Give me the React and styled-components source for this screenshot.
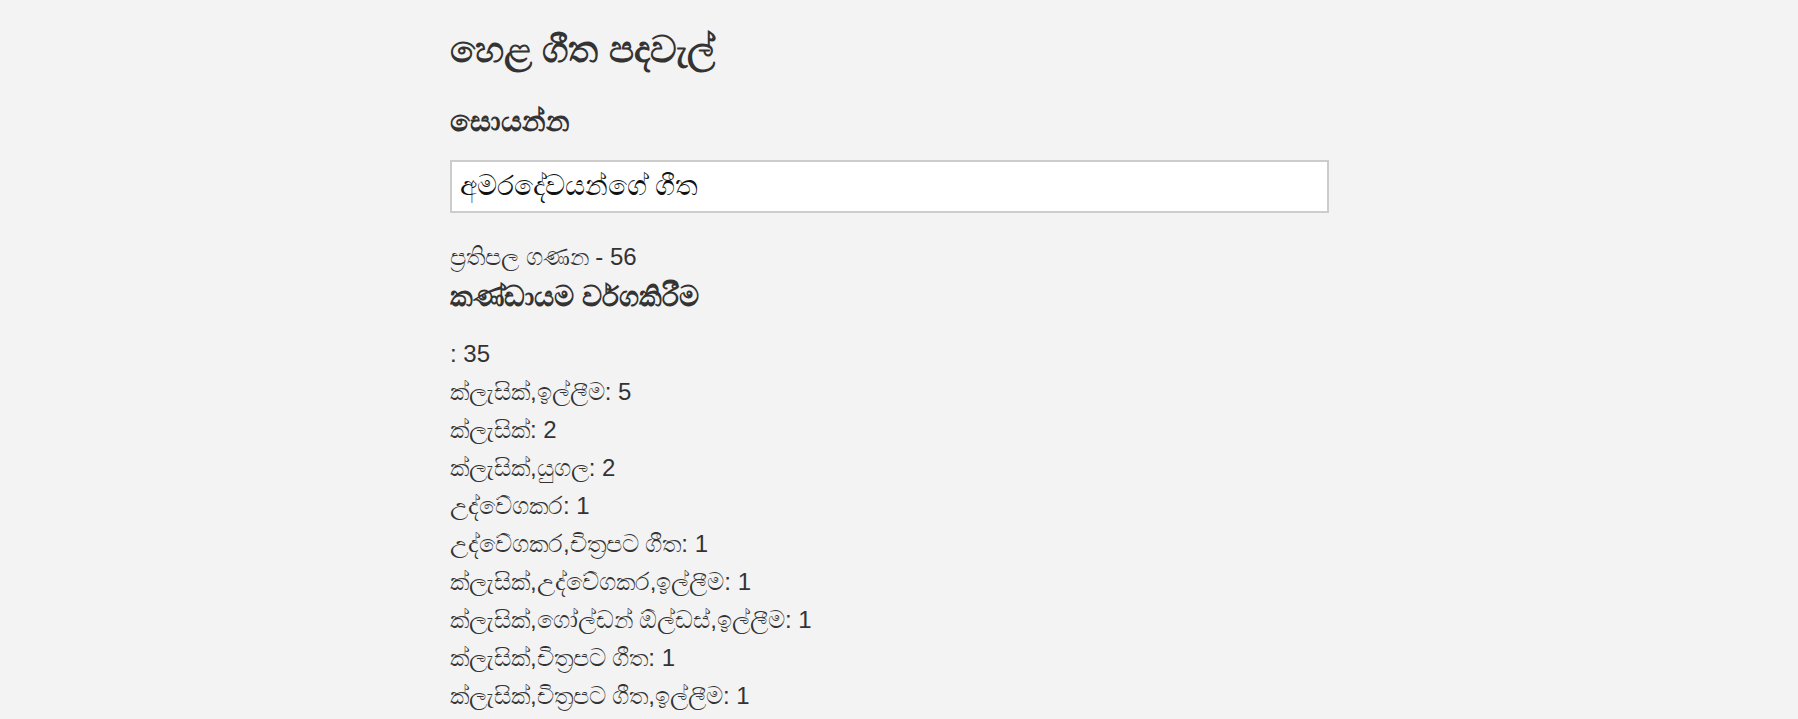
import { createGlobalStyle, styled } from 'styled-components';

const GlobalStyle = createGlobalStyle`
  html, body {
    margin: 0;
    padding: 0;
    background: #f3f3f3;
  }
  body {
    font-family: 'Liberation Sans', Arial, sans-serif;
    color: #333;
  }
`;

const categoryCounts = [
  { name: '', count: 35 },
  { name: 'ක්ලැසික්,ඉල්ලීම', count: 5 },
  { name: 'ක්ලැසික්', count: 2 },
  { name: 'ක්ලැසික්,යුගල', count: 2 },
  { name: 'උද්වේගකර', count: 1 },
  { name: 'උද්වේගකර,චිත්‍රපට ගීත', count: 1 },
  { name: 'ක්ලැසික්,උද්වේගකර,ඉල්ලීම', count: 1 },
  { name: 'ක්ලැසික්,ගෝල්ඩන් ඕල්ඩස්,ඉල්ලීම', count: 1 },
  { name: 'ක්ලැසික්,චිත්‍රපට ගීත', count: 1 },
  { name: 'ක්ලැසික්,චිත්‍රපට ගීත,ඉල්ලීම', count: 1 },
  { name: 'යුගල', count: 1 },
  { name: 'චිත්‍රපට ගීත', count: 1 },
];

// ZWNJ keeps the ර් visible before ග, as the page shows it
const groupTitle = 'කණ්ඩායම ව\u0DBB\u0DCA\u200C\u0D9Cකිරීම';

const App = () => {
  return (
    <Page>
      <GlobalStyle />
      <Title>හෙළ ගීත පදවැල්</Title>
      <SearchLabel>සොයන්න</SearchLabel>
      <SearchInput type="text" defaultValue="අමරදේවයන්ගේ ගීත" />
      <ResultCount>ප්‍රතිපල ගණන - 56</ResultCount>
      <GroupHeadline>{groupTitle}</GroupHeadline>
      <CategoryList>
        {categoryCounts.map((item, index) => (
          <CategoryRow key={index}>
            {item.name}: {item.count}
          </CategoryRow>
        ))}
      </CategoryList>
    </Page>
  );
};

const Page = styled.div`
  width: 879px;
  margin-left: calc(50% - 449px);
  padding-top: 28px;
`;

const Title = styled.h1`
  font-size: 37px;
  font-weight: bold;
  margin: 0 0 31px;
  line-height: 44px;
`;

const SearchLabel = styled.h2`
  font-size: 29px;
  font-weight: bold;
  margin: 0 0 21px;
  line-height: 36px;
`;

const SearchInput = styled.input`
  display: block;
  box-sizing: border-box;
  width: 100%;
  height: 53px;
  padding: 0 8px;
  border: 2px solid #ccc;
  background: #fff;
  font-family: 'Liberation Sans', Arial, sans-serif;
  font-size: 28px;
  color: #111;
  outline: none;
`;

const ResultCount = styled.div`
  margin-top: 27px;
  font-size: 24px;
  line-height: 34px;
`;

const GroupHeadline = styled.h3`
  font-size: 28px;
  font-weight: bold;
  margin: 5px 0 20px;
  line-height: 36px;
`;

const CategoryList = styled.div`
  display: flex;
  flex-direction: column;
`;

const CategoryRow = styled.div`
  font-size: 24px;
  line-height: 38px;
`;

export default App;
